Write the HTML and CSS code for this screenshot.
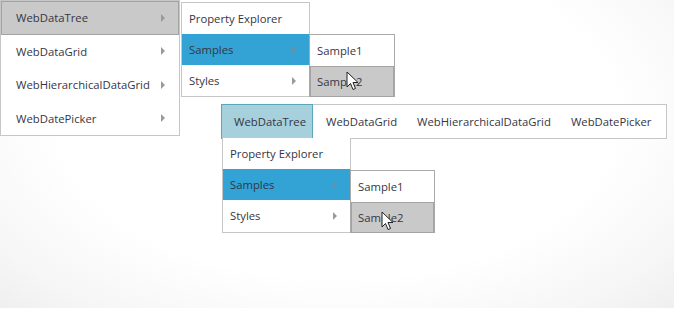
FILE: index.html
```html
<!DOCTYPE html>
<html>
<head>
    <title>Menu Samples</title>
    <link rel="stylesheet" href="styles.css">
</head>
<body>
    <div class="stage">
        <!-- vertical menu -->
        <ul class="menu vmenu">
            <li class="item hover-gray">WebDataTree <span class="arrow"></span></li>
            <li class="item">WebDataGrid <span class="arrow"></span></li>
            <li class="item">WebHierarchicalDataGrid <span class="arrow"></span></li>
            <li class="item">WebDatePicker <span class="arrow"></span></li>
        </ul>
        <ul class="menu sub sub-a">
            <li class="item">Property Explorer</li>
            <li class="item selected">Samples <span class="arrow"></span></li>
            <li class="item">Styles <span class="arrow"></span></li>
        </ul>
        <ul class="menu sub sub-b">
            <li class="item">Sample1</li>
            <li class="item hover-gray">Sample2</li>
        </ul>
        <svg class="cursor cursor-a" width="14" height="20" viewBox="0 0 14 20"><path d="M1 1 L1 16 L4.5 12.5 L7 18.5 L9.5 17.5 L7 11.5 L12 11.5 Z" fill="#fff" stroke="#222" stroke-width="1"/></svg>

        <!-- horizontal menu -->
        <ul class="menu hmenu">
            <li class="hitem hover-blue">WebDataTree</li>
            <li class="hitem">WebDataGrid</li>
            <li class="hitem">WebHierarchicalDataGrid</li>
            <li class="hitem">WebDatePicker</li>
        </ul>
        <ul class="menu sub sub-c">
            <li class="item">Property Explorer</li>
            <li class="item selected">Samples <span class="arrow"></span></li>
            <li class="item">Styles <span class="arrow"></span></li>
        </ul>
        <ul class="menu sub sub-d">
            <li class="item">Sample1</li>
            <li class="item hover-gray">Sample2</li>
        </ul>
        <svg class="cursor cursor-b" width="14" height="20" viewBox="0 0 14 20"><path d="M1 1 L1 16 L4.5 12.5 L7 18.5 L9.5 17.5 L7 11.5 L12 11.5 Z" fill="#fff" stroke="#222" stroke-width="1"/></svg>
    </div>
</body>
</html>
```

FILE: styles.css
```css
body {
    margin: 0;
    background: #fff;
    font-family: "Open Sans", "Noto Sans", sans-serif;
    overflow: hidden;
}
.stage {
    position: relative;
    width: 674px;
    height: 308px;
    background:
        radial-gradient(ellipse 75% 95% at 50% 38%, #fff 55%, #f6f6f6 80%, #ececec 100%);
    box-shadow: 0 8px 12px -6px rgba(0,0,0,0.35);
}
.menu {
    list-style: none;
    margin: 0;
    padding: 0;
    position: absolute;
    background: #fff;
    border: 1px solid #c6c6c6;
    box-sizing: border-box;
}
.item {
    display: flex;
    align-items: center;
    justify-content: space-between;
    font-size: 11.3px;
    color: #363544;
    box-sizing: border-box;
    border: 1px solid transparent;
}
.arrow {
    width: 0;
    height: 0;
    border-top: 4px solid transparent;
    border-bottom: 4px solid transparent;
    border-left: 4px solid #9a9a9a;
}
.vmenu {
    left: 0;
    top: 0;
    width: 180px;
    height: 136px;
}
.vmenu .item {
    height: 33.5px;
    padding: 0 13px 0 14px;
}
.hover-gray {
    background: #c9c9c9;
    border-color: #a3a3a3;
}
.selected {
    background: #32a3d4;
}
.selected .arrow {
    border-left-color: #6b8fa0;
}
.sub .item {
    height: 31px;
    padding: 0 12px 0 6px;
}
.sub-a {
    left: 181px;
    top: 2px;
    width: 129px;
    height: 95px;
}
.sub-b {
    left: 309px;
    top: 34px;
    width: 86px;
    height: 63px;
    border-color: #a9a9a9;
}
.sub-b .item, .sub-d .item {
    padding-left: 6px;
}
.hmenu {
    left: 221px;
    top: 104px;
    width: 446px;
    height: 35px;
    display: flex;
    align-items: stretch;
}
.hitem {
    display: flex;
    align-items: center;
    padding: 0 6px 0 12px;
    font-size: 11.3px;
    color: #363544;
    border: 1px solid transparent;
    margin: -1px 0;
}
.hover-blue {
    background: #a6d0dc;
    border-color: #5aa7bb;
    margin-left: -1px;
}
.sub-c {
    left: 222px;
    top: 138px;
    width: 129px;
    height: 95px;
    border-top: none;
}
.sub-d {
    left: 350px;
    top: 170px;
    width: 85px;
    height: 63px;
    border-color: #a9a9a9;
}
.cursor {
    position: absolute;
}
.cursor-a {
    left: 346px;
    top: 71px;
}
.cursor-b {
    left: 381px;
    top: 211px;
}
```
